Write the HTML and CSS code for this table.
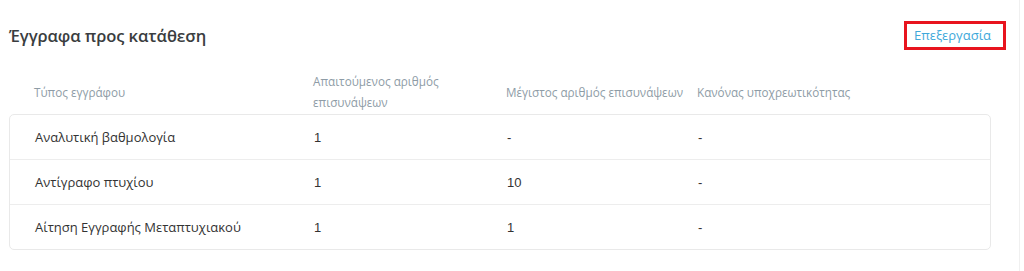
FILE: index.html
```html
<!DOCTYPE html>
<html lang="el">
<head>
<meta charset="utf-8">
<link rel="stylesheet" href="styles.css">
</head>
<body>
<div class="page">
  <section class="panel">
    <div class="panel-head">
      <h2 class="title">Έγγραφα προς κατάθεση</h2>
      <a class="edit-link" href="#">Επεξεργασία</a>
    </div>
    <div class="thead">
      <div class="th">Τύπος εγγράφου</div>
      <div class="th">Απαιτούμενος αριθμός επισυνάψεων</div>
      <div class="th">Μέγιστος αριθμός επισυνάψεων</div>
      <div class="th">Κανόνας υποχρεωτικότητας</div>
    </div>
    <div class="card">
      <div class="row">
        <div class="td">Αναλυτική βαθμολογία</div>
        <div class="td num">1</div>
        <div class="td num">-</div>
        <div class="td num">-</div>
      </div>
      <div class="row">
        <div class="td">Αντίγραφο πτυχίου</div>
        <div class="td num">1</div>
        <div class="td num">10</div>
        <div class="td num">-</div>
      </div>
      <div class="row">
        <div class="td">Αίτηση Εγγραφής Μεταπτυχιακού</div>
        <div class="td num">1</div>
        <div class="td num">1</div>
        <div class="td num">-</div>
      </div>
    </div>
  </section>
  <div class="edge"></div>
</div>
</body>
</html>
```
FILE: styles.css
```css
html, body {
  margin: 0;
  padding: 0;
  background: #ffffff;
}
body {
  font-family: "Open Sans", "Noto Sans", sans-serif;
  color: #333333;
}
.page {
  display: flex;
  height: 271px;
}
.panel {
  width: 982px;
  margin-left: 9px;
}
.edge {
  margin-left: 28px;
  width: 1px;
  background: #f0f0f0;
}
.panel-head {
  display: flex;
  justify-content: space-between;
  align-items: center;
  height: 40px;
  margin-top: 15px;
}
.title {
  margin: 0;
  font-size: 16.6px;
  font-weight: 600;
  color: #3a3d40;
  letter-spacing: -0.1px;
}
.edit-link {
  position: relative;
  display: block;
  line-height: 16px;
  font-size: 13px;
  color: #3ea8da;
  text-decoration: none;
}
.edit-link::after {
  content: "";
  position: absolute;
  left: -10px;
  right: -15px;
  top: -6px;
  bottom: -7px;
  border: 3px solid #e8141e;
}
.thead, .row {
  display: grid;
  grid-template-columns: 279px 193px 191px 1fr;
  padding-left: 25px;
}
.thead {
  height: 44px;
  padding-top: 15px;
  align-items: center;
}
.th {
  font-size: 11.7px;
  line-height: 21px;
  color: #8e9ca6;
  padding-right: 40px;
}
.th:nth-child(3), .th:nth-child(4) {
  padding-right: 0;
  white-space: nowrap;
}
.card {
  border: 1px solid #e9e9e9;
  border-radius: 5px;
}
.row {
  height: 44px;
  align-items: center;
  font-size: 13px;
  color: #333333;
}
.row + .row {
  border-top: 1px solid #ededed;
}
.num {
  font-family: "Liberation Sans", Arial, sans-serif;
  font-size: 13px;
}
```
